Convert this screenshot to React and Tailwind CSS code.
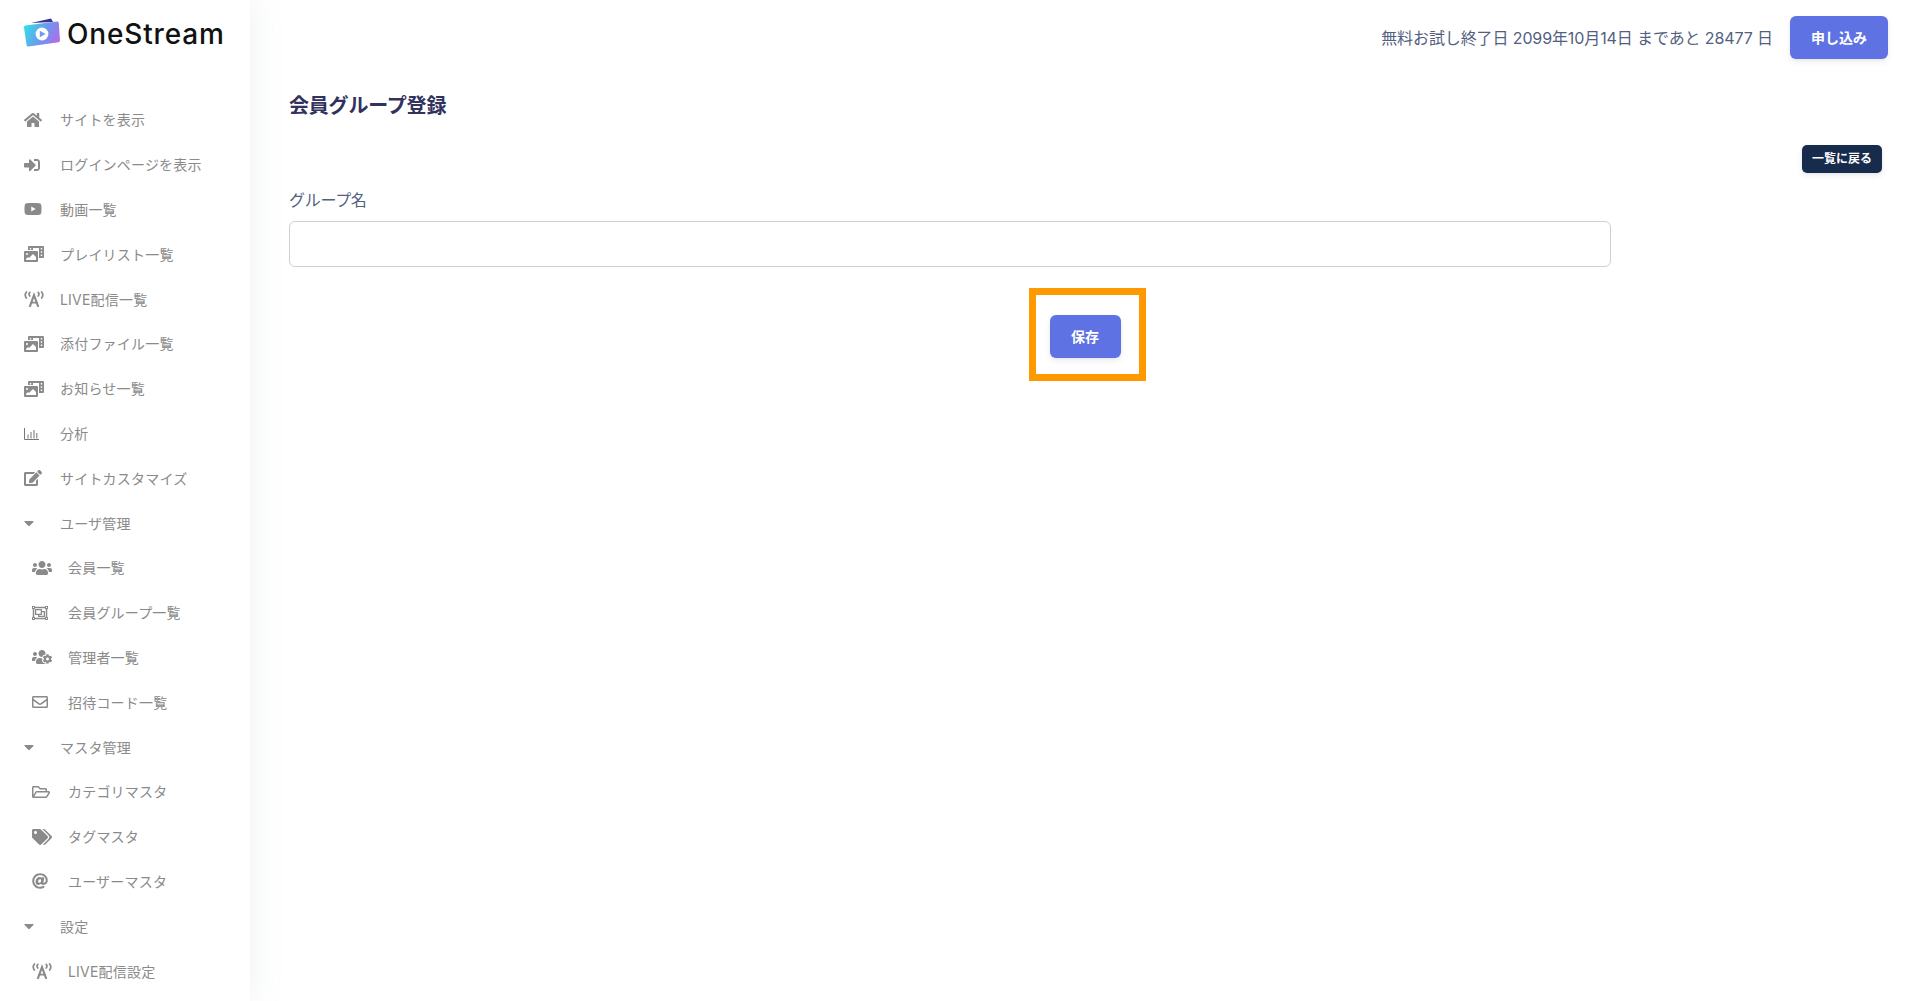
import React from 'react';
import {
  FaHome, FaSignInAlt, FaYoutube, FaPhotoVideo, FaEdit, FaCaretDown, FaUsers,
  FaRegObjectGroup, FaUsersCog, FaRegEnvelope, FaRegFolderOpen, FaTags, FaAt,
} from 'react-icons/fa';

const FONT = "font-['Inter','Noto_Sans_CJK_JP',sans-serif]";
const BTN_SHADOW = 'shadow-[0_3px_6px_rgba(50,50,93,0.08),0_1px_3px_rgba(0,0,0,0.05)]';

// antenna glyph: an A between two pairs of arcs
const LiveIcon = ({ className }) => (
  <svg viewBox="0 0 20 16" className={className} fill="none" stroke="currentColor" strokeLinecap="round">
    <path d="M6 15.2 L10 4 L14 15.2" strokeWidth="2.1" />
    <path d="M7.4 11.6 H12.6" strokeWidth="1.8" />
    <path d="M2.4 1 C0.8 3 0.8 5 2.4 7" strokeWidth="1.7" />
    <path d="M5.8 1.4 C4.8 2.6 4.8 3.9 5.8 5" strokeWidth="1.7" />
    <path d="M17.6 1 C19.2 3 19.2 5 17.6 7" strokeWidth="1.7" />
    <path d="M14.2 1.4 C15.2 2.6 15.2 3.9 14.2 5" strokeWidth="1.7" />
  </svg>
);

// thin bar chart, the light weight of the chart icon
const ChartIcon = ({ className }) => (
  <svg viewBox="0 0 15 15" className={className} fill="none" stroke="#777" strokeWidth="1">
    <path d="M0.5 2 V13.5 H15" />
    <path d="M4 12.5 V8.5 M7 12.5 V6 M10 12.5 V4 M12.8 12.5 V7" />
  </svg>
);

const Logo = () => (
  <svg viewBox="0 0 36 30" className="w-[36px] h-[30px]">
    <defs>
      <linearGradient id="card" x1="0" y1="0.3" x2="1" y2="0.7">
        <stop offset="0" stopColor="#35dbe6" />
        <stop offset="0.55" stopColor="#6f96ee" />
        <stop offset="1" stopColor="#b56be6" />
      </linearGradient>
    </defs>
    <path d="M7 5 L27 0.5 L29 4 Z" fill="#3b2f8f" />
    <path d="M1.2 7.6 L33 3.6 Q34.6 3.5 34.8 5 L36 22.6 Q36 24 34.6 24.2 L4.4 28.6 Q2.8 28.8 2.6 27.2 L0 9.4 Q-0.1 7.8 1.2 7.6 Z" fill="url(#card)" />
    <circle cx="18" cy="16" r="6.4" fill="#fff" />
    <path d="M15.8 12.8 L21.6 16 L15.8 19.2 Z" fill="#6f9bf0" />
  </svg>
);

const menu = [
  { icon: FaHome, size: 'w-[18px] h-[16px]', label: 'サイトを表示' },
  { icon: FaSignInAlt, size: 'w-[16px] h-[16px]', label: 'ログインページを表示' },
  { icon: FaYoutube, size: 'w-[18px] h-[16px]', label: '動画一覧' },
  { icon: FaPhotoVideo, size: 'w-[20px] h-[16px]', label: 'プレイリスト一覧' },
  { icon: LiveIcon, size: 'w-[20px] h-[16px]', label: 'LIVE配信一覧' },
  { icon: FaPhotoVideo, size: 'w-[20px] h-[16px]', label: '添付ファイル一覧' },
  { icon: FaPhotoVideo, size: 'w-[20px] h-[16px]', label: 'お知らせ一覧' },
  { icon: ChartIcon, size: 'w-[15px] h-[15px]', label: '分析' },
  { icon: FaEdit, size: 'w-[18px] h-[16px]', label: 'サイトカスタマイズ' },
  { icon: FaCaretDown, size: 'w-[10px] h-[16px]', label: 'ユーザ管理' },
  { icon: FaUsers, size: 'w-[20px] h-[16px]', label: '会員一覧', sub: true },
  { icon: FaRegObjectGroup, size: 'w-[16px] h-[16px]', label: '会員グループ一覧', sub: true },
  { icon: FaUsersCog, size: 'w-[20px] h-[16px]', label: '管理者一覧', sub: true },
  { icon: FaRegEnvelope, size: 'w-[16px] h-[16px]', label: '招待コード一覧', sub: true },
  { icon: FaCaretDown, size: 'w-[10px] h-[16px]', label: 'マスタ管理' },
  { icon: FaRegFolderOpen, size: 'w-[18px] h-[16px]', label: 'カテゴリマスタ', sub: true },
  { icon: FaTags, size: 'w-[20px] h-[16px]', label: 'タグマスタ', sub: true },
  { icon: FaAt, size: 'w-[16px] h-[16px]', label: 'ユーザーマスタ', sub: true },
  { icon: FaCaretDown, size: 'w-[10px] h-[16px]', label: '設定' },
  { icon: LiveIcon, size: 'w-[20px] h-[16px]', label: 'LIVE配信設定', sub: true },
];

const Sidebar = () => (
  <aside className="w-[250px] shrink-0 h-full bg-white shadow-[0_0_32px_0_rgba(136,152,170,0.15)] overflow-hidden z-10">
    <div className="h-[97.5px] pl-[24px] pt-[18px] flex items-start gap-[7px]">
      <Logo />
      <span className="text-[28px] leading-[32px] font-medium tracking-[0.85px] text-[#111]">OneStream</span>
    </div>
    <nav className="flex flex-col">
      {menu.map(({ icon: Icon, size, label, sub }) => (
        <div key={label} className={`h-[44.8px] flex items-center text-[#8a8a8a] ${sub ? 'pl-[32px]' : 'pl-[24px]'}`}>
          <span className="w-[36px] shrink-0 flex items-center">
            <Icon className={size} />
          </span>
          <span className="text-[14px] tracking-[0.2px] whitespace-nowrap">{label}</span>
        </div>
      ))}
    </nav>
  </aside>
);

export default function App() {
  return (
    <div className={`${FONT} relative flex w-full h-[1001px] overflow-hidden bg-white`}>
      <Sidebar />
      <main className="flex-1 flex flex-col">
        <div className="h-[75px] flex items-start justify-end pt-[16px] pr-[32px]">
          <span className="mr-[17px] leading-[44px] text-[16px] tracking-[-0.11px] text-[#525f7f]">無料お試し終了日 2099年10月14日 まであと 28477 日</span>
          <button className={`w-[98px] h-[43px] rounded-[6px] bg-[#5e72e4] text-white text-[14px] font-semibold ${BTN_SHADOW}`}>申し込み</button>
        </div>
        <div className="px-[39px]">
          <h1 className="text-[20px] leading-[30px] font-bold tracking-[-0.2px] text-[#32325d] mt-[16px]">会員グループ登録</h1>
          <div className="flex justify-end mt-[24px]">
            <button className={`-mr-px w-[80px] h-[28px] rounded-[5px] bg-[#172b4d] text-white text-[12px] font-semibold ${BTN_SHADOW}`}>一覧に戻る</button>
          </div>
          <label className="block mt-[15px] text-[16px] leading-[24px] tracking-[-0.3px] text-[#525f7f]">グループ名</label>
          <input className="block mt-[9px] w-[1322px] h-[46px] rounded-[6px] border border-[#cad1d7] bg-white" />
        </div>
        <div className="flex justify-center mt-[48px]">
          <button className={`w-[71px] h-[43px] rounded-[6px] bg-[#5e72e4] text-white text-[14px] font-semibold ${BTN_SHADOW}`}>保存</button>
        </div>
      </main>
      {/* orange annotation drawn over the screenshot */}
      <div className="absolute left-[1029px] top-[288px] w-[117px] h-[93px] border-[7px] border-[#ff9900]" />
    </div>
  );
}
